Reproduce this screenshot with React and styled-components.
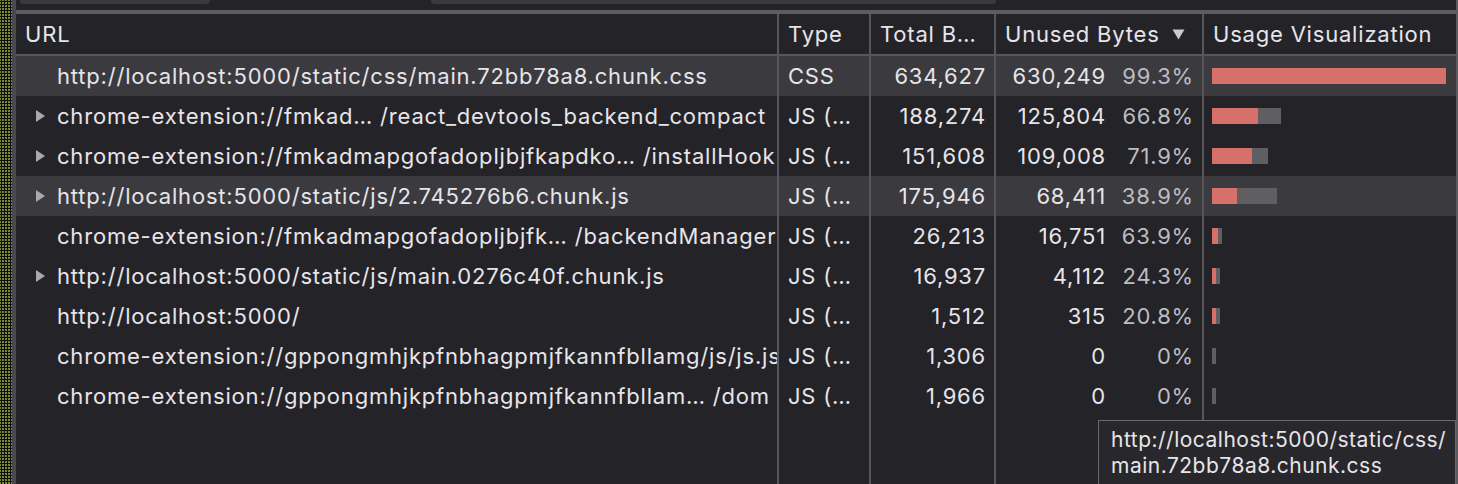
import React from "react";
import styled, { createGlobalStyle } from "styled-components";

const Global = createGlobalStyle`
  html, body { margin: 0; padding: 0; background: #242328; }
  body { font-family: Inter, "Noto Sans", "Liberation Sans", sans-serif; }
  * { box-sizing: border-box; }
`;

const COLS = "763px 92px 125px 208px 1fr";
const SEP = "#57565b";
const MAX_TOTAL = 634627;
const BAR_W = 234;

const rows = [
  { url: "http://localhost:5000/static/css/main.72bb78a8.chunk.css", exp: false, type: "CSS", total: 634627, unused: 630249, pct: "99.3%", sel: true },
  { url: "chrome-extension://fmkad… /react_devtools_backend_compact", exp: true, type: "JS (…", total: 188274, unused: 125804, pct: "66.8%" },
  { url: "chrome-extension://fmkadmapgofadopljbjfkapdko… /installHook", exp: true, type: "JS (…", total: 151608, unused: 109008, pct: "71.9%" },
  { url: "http://localhost:5000/static/js/2.745276b6.chunk.js", exp: true, type: "JS (…", total: 175946, unused: 68411, pct: "38.9%", sel: true },
  { url: "chrome-extension://fmkadmapgofadopljbjfk… /backendManager", exp: false, type: "JS (…", total: 26213, unused: 16751, pct: "63.9%" },
  { url: "http://localhost:5000/static/js/main.0276c40f.chunk.js", exp: true, type: "JS (…", total: 16937, unused: 4112, pct: "24.3%" },
  { url: "http://localhost:5000/", exp: false, type: "JS (…", total: 1512, unused: 315, pct: "20.8%" },
  { url: "chrome-extension://gppongmhjkpfnbhagpmjfkannfbllamg/js/js.js", exp: false, type: "JS (…", total: 1306, unused: 0, pct: "0%" },
  { url: "chrome-extension://gppongmhjkpfnbhagpmjfkannfbllam… /dom", exp: false, type: "JS (…", total: 1966, unused: 0, pct: "0%" },
];

const fmt = (n) => n.toLocaleString("en-US");

const Root = styled.div`
  position: relative;
  display: flex;
  width: 1458px;
  height: 484px;
  overflow: hidden;
  background: #242328;
  color: #e6e5ea;
  font-size: 22px;
  letter-spacing: 0.8px;
`;

const Desktop = styled.div`
  width: 12px;
  flex: none;
  background-color: #7d873a;
  background-image: radial-gradient(circle at 1.5px 1.5px, #0e1006 1px, transparent 1.4px);
  background-size: 3px 3px;
`;

const Panel = styled.div`
  flex: 1;
  display: flex;
  flex-direction: column;
  border-left: 4px solid #4a494e;
  border-right: 2px solid #5a595e;
  min-width: 0;
`;

const Toolbar = styled.div`
  height: 10px;
  flex: none;
  display: flex;
  align-items: flex-start;
  padding-left: 4px;
  gap: 221px;
  border-bottom: 4px solid #5d5c61;
  box-sizing: content-box;
`;

const Field = styled.div`
  width: ${(p) => p.$w}px;
  height: 4px;
  background: #3a393e;
  border-radius: 0 0 8px 8px;
`;

const Table = styled.div`
  flex: 1;
  display: flex;
  flex-direction: column;
  min-height: 0;
`;

const Grid = styled.div`
  display: grid;
  grid-template-columns: ${COLS};
  height: 40px;
  flex: none;
  background: ${(p) => (p.$sel ? "#3b3a3f" : "transparent")};
`;

const HeaderRow = styled(Grid)`
  height: 42px;
  border-bottom: 2px solid ${SEP};
`;

const Filler = styled(Grid)`
  flex: 1;
  height: auto;
`;

const Cell = styled.div`
  display: flex;
  align-items: center;
  min-width: 0;
  overflow: hidden;
  white-space: nowrap;
  padding: 0 ${(p) => (p.$right ? 8 : 0)}px 0 ${(p) => p.$pl ?? 9}px;
  justify-content: ${(p) => (p.$right ? "flex-end" : "flex-start")};
  border-right: ${(p) => (p.$last ? "none" : `2px solid ${SEP}`)};
`;

const UrlText = styled.span`
  overflow: hidden;
  white-space: nowrap;
`;

const Twisty = styled.span`
  width: 22px;
  flex: none;
  display: flex;
  align-items: center;
`;

const Num = styled.span`
  flex: 1;
  text-align: right;
`;

const Pct = styled.span`
  width: 88px;
  text-align: right;
  color: #bdbcc1;
`;

const Bars = styled.div`
  display: flex;
  height: 16px;
`;

const Seg = styled.div`
  height: 16px;
  background: ${(p) => (p.$used ? "#5f5e63" : "#d5706a")};
`;

const SortArrow = styled.svg`
  margin-left: 12px;
  flex: none;
`;

const Tip = styled.div`
  position: absolute;
  left: 1098px;
  top: 420px;
  width: 358px;
  height: 80px;
  background: #28272c;
  border: 1px solid #6a696e;
  padding: 6px 12px;
  font-size: 21px;
  letter-spacing: 0.5px;
  line-height: 26px;
  color: #e6e5ea;
  white-space: nowrap;
`;

function Triangle() {
  return (
    <svg width="11" height="14" viewBox="0 0 11 14">
      <path d="M1 1 L10 7 L1 13 Z" fill="#a9a8ad" />
    </svg>
  );
}

function Usage({ total, unused }) {
  const t = (total / MAX_TOTAL) * BAR_W;
  const u = (unused / MAX_TOTAL) * BAR_W;
  let red = unused > 0 ? Math.max(u, 4) : 0;
  let grey = Math.max(t - red, t > 50 ? 0 : 4);
  if (t > 50 && grey < 2) {
    red = t;
    grey = 0;
  }
  return (
    <Bars>
      {red > 0 && <Seg style={{ width: red }} />}
      {grey > 0 && <Seg $used style={{ width: grey }} />}
    </Bars>
  );
}

export default function App() {
  return (
    <>
      <Global />
      <Root>
        <Desktop />
        <Panel>
          <Toolbar>
            <Field $w={190} />
            <Field $w={565} />
          </Toolbar>
          <Table>
            <HeaderRow>
              <Cell>URL</Cell>
              <Cell>Type</Cell>
              <Cell>Total B…</Cell>
              <Cell>
                Unused Bytes
                <SortArrow width="13" height="11" viewBox="0 0 13 11">
                  <path d="M0.5 0.5 H12.5 L6.5 10.5 Z" fill="#c9c8cd" />
                </SortArrow>
              </Cell>
              <Cell $last>Usage Visualization</Cell>
            </HeaderRow>
            {rows.map((r, i) => (
              <Grid key={i} $sel={r.sel}>
                <Cell $pl={19}>
                  <Twisty>{r.exp && <Triangle />}</Twisty>
                  <UrlText>{r.url}</UrlText>
                </Cell>
                <Cell>{r.type}</Cell>
                <Cell $right>{fmt(r.total)}</Cell>
                <Cell $right>
                  <Num>{fmt(r.unused)}</Num>
                  <Pct>{r.pct}</Pct>
                </Cell>
                <Cell $last $pl={8}>
                  <Usage total={r.total} unused={r.unused} />
                </Cell>
              </Grid>
            ))}
            <Filler>
              <Cell />
              <Cell />
              <Cell />
              <Cell />
              <Cell $last />
            </Filler>
          </Table>
        </Panel>
        <Tip>
          http://localhost:5000/static/css/
          <br />
          main.72bb78a8.chunk.css
        </Tip>
      </Root>
    </>
  );
}
